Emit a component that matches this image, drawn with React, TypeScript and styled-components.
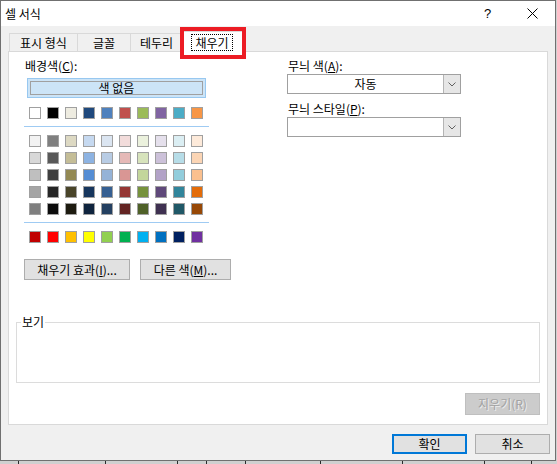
import React from 'react'
import styled, { createGlobalStyle } from 'styled-components'

const GlobalStyle = createGlobalStyle`
  html, body {
    margin: 0;
    padding: 0;
  }
  body {
    background: #d0d0d0;
    font-family: 'Noto Sans CJK KR', 'Malgun Gothic', sans-serif;
    font-size: 12px;
    color: #000;
  }
  * {
    box-sizing: border-box;
  }
`

const Dialog = styled.div`
  position: relative;
  width: 556px;
  height: 461px;
  background: #f0f0f0;
  border: 1px solid #707070;
  display: flex;
  flex-direction: column;
`

const TitleBar = styled.div`
  display: flex;
  align-items: center;
  height: 25px;
  background: #fff;
  padding-left: 4px;
`

const Title = styled.div`
  flex: 1;
  line-height: 14px;
`

const TitleButton = styled.div`
  width: 45px;
  height: 25px;
  display: flex;
  align-items: center;
  justify-content: center;
  font-family: 'Liberation Sans', sans-serif;
  font-size: 13px;
`

const Content = styled.div`
  padding: 5px 7px 0 7px;
`

const TabStrip = styled.div`
  display: flex;
  align-items: flex-end;
  height: 20px;
  padding-left: 1px;
`

const Tab = styled.div<{ $w: number; $active?: boolean }>`
  position: relative;
  width: ${(p) => p.$w}px;
  height: ${(p) => (p.$active ? 21 : 18)}px;
  margin-left: ${(p) => (p.$active ? -2 : -1)}px;
  margin-bottom: ${(p) => (p.$active ? -1 : 0)}px;
  z-index: ${(p) => (p.$active ? 1 : 0)};
  background: ${(p) => (p.$active ? '#fff' : '#f0f0f0')};
  border: 1px solid #d9d9d9;
  border-bottom: none;
  display: flex;
  align-items: center;
  justify-content: center;
  line-height: 14px;

  &:first-child {
    margin-left: 0;
  }
`

const FocusText = styled.span`
  outline: 1px dotted #000;
  outline-offset: 0;
  padding: 0 3px;
  line-height: 15px;
`

const Highlight = styled.div`
  position: absolute;
  left: 179px;
  top: 26px;
  width: 66px;
  height: 32px;
  border: 4px solid #ec1c24;
  pointer-events: none;
  z-index: 2;
`

const Panel = styled.div`
  height: 374px;
  background: #fff;
  border: 1px solid #d9d9d9;
  padding: 7px 7px 9px 7px;
  display: flex;
  flex-direction: column;
`

const Columns = styled.div`
  display: grid;
  grid-template-columns: 185px 174px;
  column-gap: 78px;
  align-items: start;
  padding-left: 8px;
`

const Column = styled.div`
  display: flex;
  flex-direction: column;
`

const Label = styled.div<{ $mt?: number }>`
  height: 14px;
  line-height: 14px;
  padding-left: 1px;
  margin-top: ${(p) => p.$mt ?? 0}px;
  white-space: nowrap;
`

const Key = styled.u`
  text-decoration-thickness: 1px;
  text-underline-offset: 1px;
`

const NoColorButton = styled.div`
  margin: 5px 0 0 3px;
  width: 179px;
  height: 20px;
  background: #cce4f7;
  border: 1px solid #98c8f0;
  box-shadow: inset 0 0 0 2px #cce4f7, inset 0 0 0 3px #a0a0a0;
  text-align: center;
  line-height: 18px;
`

const SwatchRow = styled.div<{ $mt: number }>`
  display: flex;
  gap: 6px;
  padding-left: 5px;
  margin-top: ${(p) => p.$mt}px;
`

const Swatch = styled.span<{ $c: string }>`
  width: 12px;
  height: 12px;
  border: 1px solid #a0a0a0;
  background: ${(p) => p.$c};
`

const Separator = styled.div`
  margin-top: 7px;
  width: 185px;
  height: 1px;
  background: #9fcbf3;
`

const Combo = styled.div`
  display: flex;
  width: 174px;
  height: 20px;
  margin-top: 1px;
  border: 1px solid #a0a0a0;
  background: #fff;
`

const ComboText = styled.div`
  flex: 1;
  text-align: center;
  line-height: 18px;
`

const ComboArrow = styled.div`
  width: 17px;
  background: #e6e6e6;
  border-left: 1px solid #b4b4b4;
  display: flex;
  align-items: center;
  justify-content: center;
`

const ActionRow = styled.div`
  display: flex;
  gap: 10px;
  margin-top: 16px;
  padding-left: 8px;
`

const PushButton = styled.div<{ $w: number }>`
  width: ${(p) => p.$w}px;
  height: 21px;
  background: #e1e1e1;
  border: 1px solid #adadad;
  text-align: center;
  line-height: 19px;
  white-space: nowrap;
`

const Preview = styled.fieldset`
  margin: 35px 0 0 0;
  padding: 0;
  width: 524px;
  height: 68px;
  border: 1px solid #dcdcdc;
`

const PreviewLegend = styled.legend`
  margin-left: 4px;
  padding: 0 1px;
  line-height: 14px;
`

const ClearButton = styled.div`
  align-self: flex-end;
  margin-top: 10px;
  width: 75px;
  height: 22px;
  background: #cccccc;
  border: 1px solid #bfbfbf;
  color: #a3a3a3;
  text-shadow: 1px 1px 0 #ececec;
  text-align: center;
  line-height: 20px;
`

const Footer = styled.div`
  display: flex;
  justify-content: flex-end;
  gap: 8px;
  padding: 9px 5px 0 0;
`

const DialogButton = styled.div<{ $primary?: boolean }>`
  width: 75px;
  height: 20px;
  background: #e1e1e1;
  border: ${(p) => (p.$primary ? '2px solid #0078d7' : '1px solid #adadad')};
  display: flex;
  align-items: center;
  justify-content: center;
  line-height: 14px;
`

const SheetStrip = styled.div`
  display: flex;
  height: 3px;
`

const SheetCell = styled.div<{ $w: number }>`
  width: ${(p) => p.$w}px;
  border-right: 1px solid #2a2a2a;
`

const baseColors = ['#FFFFFF', '#000000', '#EEECE1', '#1F497D', '#4F81BD', '#C0504D', '#9BBB59', '#8064A2', '#4BACC6', '#F79646']

const themeRows = [
  ['#F2F2F2', '#7F7F7F', '#DDD9C3', '#C6D9F0', '#DBE5F1', '#F2DCDB', '#EBF1DD', '#E5E0EC', '#DBEEF3', '#FDEADA'],
  ['#D8D8D8', '#595959', '#C4BD97', '#8DB3E2', '#B8CCE4', '#E5B9B7', '#D7E3BC', '#CCC1D9', '#B7DDE8', '#FBD5B5'],
  ['#BFBFBF', '#3F3F3F', '#938953', '#548DD4', '#95B3D7', '#D99694', '#C3D69B', '#B2A2C7', '#92CDDC', '#FAC08F'],
  ['#A5A5A5', '#262626', '#494429', '#17365D', '#366092', '#953734', '#76923C', '#5F497A', '#31859B', '#E36C09'],
  ['#7F7F7F', '#0C0C0C', '#1D1B10', '#0F243E', '#244061', '#632423', '#4F6128', '#3F3151', '#205867', '#974806'],
]

const standardColors = ['#C00000', '#FF0000', '#FFC000', '#FFFF00', '#92D050', '#00B050', '#00B0F0', '#0070C0', '#002060', '#7030A0']

const sheetCells = [19, 87, 72, 29, 39, 75, 82, 82, 47]

const Chevron = () => (
  <svg width="8" height="5" viewBox="0 0 8 5">
    <polyline points="0.5,0.5 4,4 7.5,0.5" fill="none" stroke="#606060" strokeWidth="1" />
  </svg>
)

const CloseIcon = () => (
  <svg width="11" height="11" viewBox="0 0 11 11">
    <path d="M0.5 0.5 L10.5 10.5 M10.5 0.5 L0.5 10.5" stroke="#000" strokeWidth="1" />
  </svg>
)

const Swatches = ({ colors, mt }: { colors: string[]; mt: number }) => (
  <SwatchRow $mt={mt}>
    {colors.map((c, i) => (
      <Swatch key={i} $c={c} />
    ))}
  </SwatchRow>
)

const App = () => {
  return (
    <>
      <GlobalStyle />
      <Dialog>
        <TitleBar>
          <Title>셀 서식</Title>
          <TitleButton>?</TitleButton>
          <TitleButton>
            <CloseIcon />
          </TitleButton>
        </TitleBar>
        <Content>
          <TabStrip>
            <Tab $w={69}>표시 형식</Tab>
            <Tab $w={54}>글꼴</Tab>
            <Tab $w={53}>테두리</Tab>
            <Tab $w={62} $active>
              <FocusText>채우기</FocusText>
            </Tab>
          </TabStrip>
          <Panel>
            <Columns>
              <Column>
                <Label>
                  배경색(<Key>C</Key>):
                </Label>
                <NoColorButton>색 없음</NoColorButton>
                <Swatches colors={baseColors} mt={9} />
                <Separator />
                {themeRows.map((row, i) => (
                  <Swatches key={i} colors={row} mt={i === 0 ? 8 : 5} />
                ))}
                <Separator />
                <Swatches colors={standardColors} mt={8} />
              </Column>
              <Column>
                <Label>
                  무늬 색(<Key>A</Key>):
                </Label>
                <Combo>
                  <ComboText>자동</ComboText>
                  <ComboArrow>
                    <Chevron />
                  </ComboArrow>
                </Combo>
                <Label $mt={8}>
                  무늬 스타일(<Key>P</Key>):
                </Label>
                <Combo>
                  <ComboText />
                  <ComboArrow>
                    <Chevron />
                  </ComboArrow>
                </Combo>
              </Column>
            </Columns>
            <ActionRow>
              <PushButton $w={106}>
                채우기 효과(<Key>I</Key>)...
              </PushButton>
              <PushButton $w={91}>
                다른 색(<Key>M</Key>)...
              </PushButton>
            </ActionRow>
            <Preview>
              <PreviewLegend>보기</PreviewLegend>
            </Preview>
            <ClearButton>지우기(R)</ClearButton>
          </Panel>
        </Content>
        <Footer>
          <DialogButton $primary>확인</DialogButton>
          <DialogButton>취소</DialogButton>
        </Footer>
        <Highlight />
      </Dialog>
      <SheetStrip>
        {sheetCells.map((w, i) => (
          <SheetCell key={i} $w={w} />
        ))}
      </SheetStrip>
    </>
  )
}

export default App
